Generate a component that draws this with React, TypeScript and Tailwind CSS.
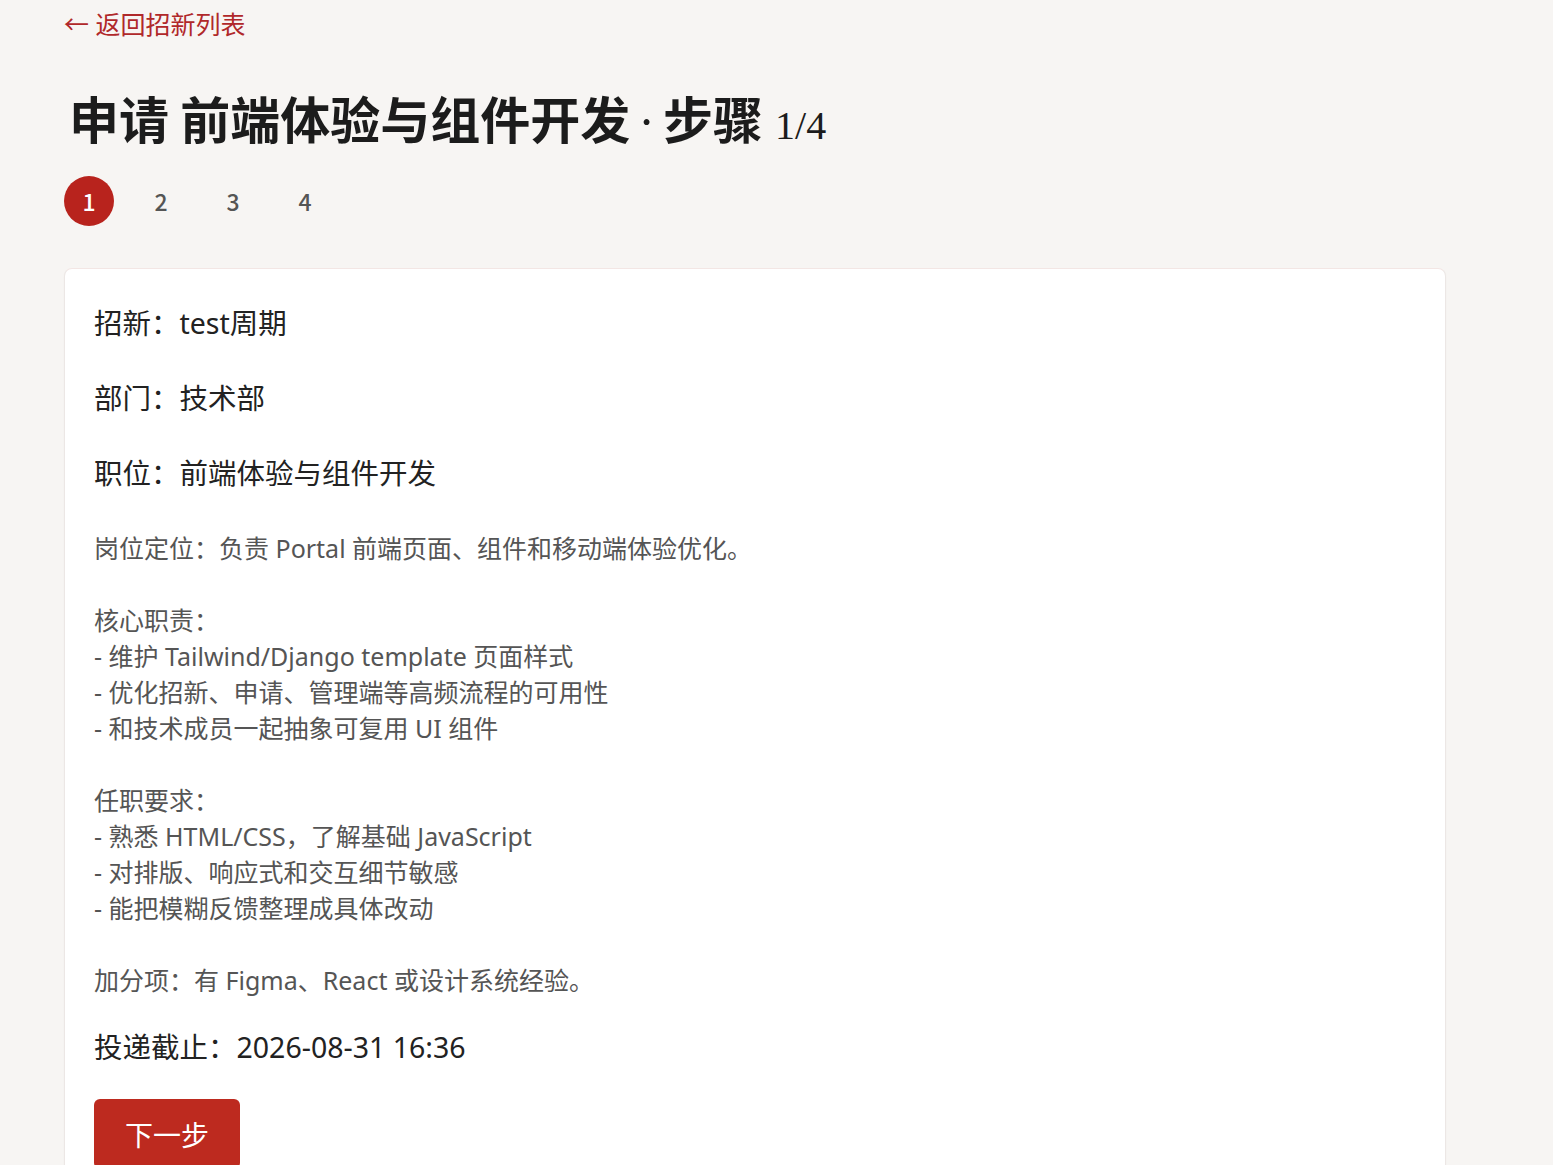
import React from 'react';

const sans = "font-['Noto_Sans','Noto_Sans_CJK_SC',sans-serif]";

const steps = [1, 2, 3, 4];

const description = `岗位定位：负责 Portal 前端页面、组件和移动端体验优化。

核心职责：
- 维护 Tailwind/Django template 页面样式
- 优化招新、申请、管理端等高频流程的可用性
- 和技术成员一起抽象可复用 UI 组件

任职要求：
- 熟悉 HTML/CSS，了解基础 JavaScript
- 对排版、响应式和交互细节敏感
- 能把模糊反馈整理成具体改动

加分项：有 Figma、React 或设计系统经验。`;

export default function App() {
  return (
    <div className={`min-h-screen bg-[#f7f5f3] ${sans}`}>
      <div className="pl-[64px] pr-[107px]">
        <a href="#" className="inline-block pt-[6px] text-[25px] leading-[34px] text-[#b0282a]">
          <span className="font-['Noto_Sans_CJK_SC',sans-serif]">←</span> 返回招新列表
        </a>

        <h1 className="mt-[46px] pl-[5px] text-[50px] leading-[60px] font-bold text-[#1c1c1c] font-['Noto_Sans_CJK_SC',serif]">
          申请 前端体验与组件开发
          <span className="mx-[8px] font-['Liberation_Serif',serif] font-normal">·</span>
          步骤
          <span className="ml-[12px] font-['Liberation_Serif',serif] text-[40px] font-normal">1/4</span>
        </h1>

        <div className="mt-[20px] flex items-center gap-[22px]">
          {steps.map(s => (
            <div
              key={s}
              className={`flex h-[50px] w-[50px] items-center justify-center rounded-full text-[23px] font-['Noto_Sans_CJK_SC',sans-serif] font-medium ${
                s === 1 ? 'bg-[#b8231d] text-white' : 'text-[#555]'
              }`}
            >
              {s}
            </div>
          ))}
        </div>

        <div className="mt-[42px] rounded-[8px] border border-[#ece7e5] border-t-[#f3e6e4] bg-white px-[29px] pt-[33px] pb-[40px] shadow-[0_1px_2px_rgba(0,0,0,0.03)]">
          <div className="flex flex-col gap-[33px] text-[28.5px] leading-[42px] text-[#222]">
            <p>招新：test周期</p>
            <p>部门：技术部</p>
            <p>职位：前端体验与组件开发</p>
          </div>

          <p className="mt-[36px] whitespace-pre-line text-[25px] leading-[36px] text-[#555]">{description}</p>

          <p className="mt-[28px] text-[28.5px] leading-[42px] text-[#222]">投递截止：2026-08-31 16:36</p>

          <button className="mt-[31px] h-[70px] rounded-[6px] bg-[#bd2a1f] px-[31px] text-[28px] font-['Noto_Sans_CJK_SC',sans-serif] text-white">
            下一步
          </button>
        </div>
      </div>
    </div>
  );
}
